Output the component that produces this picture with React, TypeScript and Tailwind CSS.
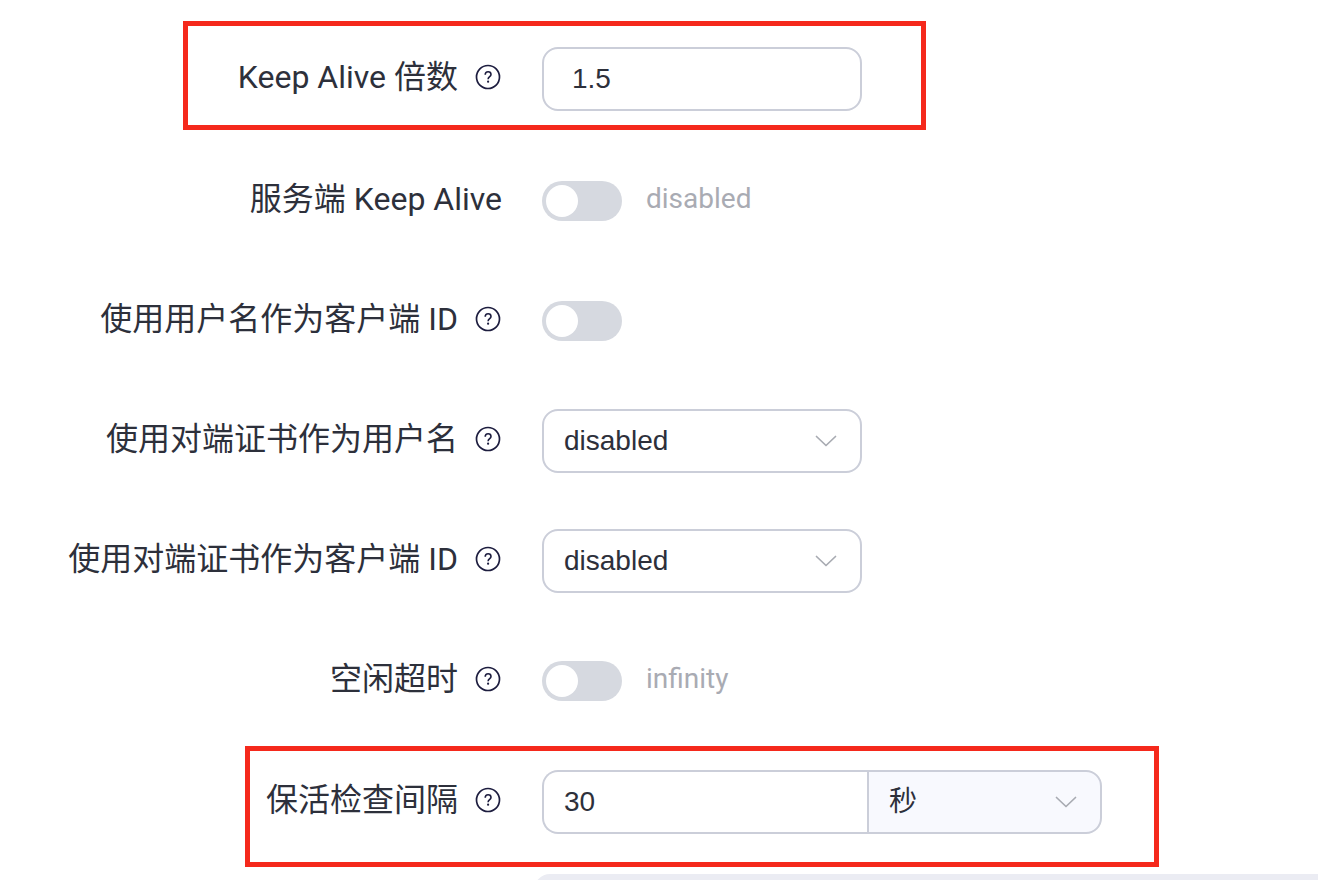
import { useState } from 'react';
import type { ReactNode } from 'react';

function HelpIcon() {
  return (
    <svg viewBox="0 0 28 28" className="ml-4 size-7 shrink-0" fill="none" stroke="#1d1d3f" strokeWidth="1.7" aria-hidden="true">
      <circle cx="14" cy="14" r="11.5" />
      <path d="M11.200 11.800c0-1.900 1.100-3 2.900-3s2.900 1.100 2.900 2.600c0 2.200-2.900 2.300-2.900 4.900" strokeWidth="1.600" />
      <circle cx="14.100" cy="18.700" r="1.100" fill="#1d1d3f" stroke="none" />
    </svg>
  );
}

function Chevron() {
  return (
    <svg viewBox="0 0 24 24" className="pointer-events-none absolute top-1/2 right-6 size-6 -translate-y-1/2" fill="none" stroke="#a8abb2" strokeWidth="1.700" strokeLinecap="round" strokeLinejoin="round" aria-hidden="true">
      <path d="M2.500 7.500l9.500 9 9.500-9" />
    </svg>
  );
}

function Row({ id, label, help = true, children }: { id: string; label: string; help?: boolean; children: ReactNode }) {
  return (
    <div className="flex h-16 items-center">
      <div className="flex w-[502px] shrink-0 items-center justify-end pb-1">
        <label htmlFor={id} className="text-[32px] leading-10 whitespace-nowrap">{label}</label>
        {help && <HelpIcon />}
      </div>
      <div className="ml-10 flex items-center">{children}</div>
    </div>
  );
}

function Toggle({ id, text }: { id: string; text?: string }) {
  return (
    <>
      <input
        id={id}
        type="checkbox"
        role="switch"
        className="h-10 w-20 appearance-none rounded-full bg-[#d6d9e0] p-1 before:block before:size-8 before:rounded-full before:bg-white checked:bg-[#00b173] checked:before:ml-10"
      />
      {text && <span className="ml-6 pb-1 text-[28px] leading-8 text-[#a9abb3]">{text}</span>}
    </>
  );
}

function Select({ id }: { id: string }) {
  return (
    <div className="relative">
      <select id={id} className="h-16 w-80 appearance-none rounded-2xl border-2 border-[#cbced9] bg-white px-5 font-['Liberation_Sans','Noto_Sans_CJK_SC',sans-serif] text-[28px]">
        <option>disabled</option>
        <option>cn</option>
        <option>dn</option>
      </select>
      <Chevron />
    </div>
  );
}

export default function App() {
  const [multiplier, setMultiplier] = useState('1.5');
  const [interval, setIntervalValue] = useState('30');
  return (
    <main className="h-screen overflow-hidden bg-white font-[Roboto,'Noto_Sans_CJK_SC',sans-serif] text-[#2d303b]">
      <form className="flex flex-col pt-[21px]">
        <div className="ml-[183px] w-[743px] border-5 border-[#f5291c] pt-[21px] pb-[14px]">
          <div className="-ml-[188px]">
            <Row id="multiplier" label="Keep Alive 倍数">
              <input id="multiplier" value={multiplier} onChange={(e) => setMultiplier(e.target.value)} className="h-16 w-80 rounded-2xl border-2 border-[#cbced9] px-7 font-['Liberation_Sans','Noto_Sans_CJK_SC',sans-serif] text-[28px]" />
            </Row>
          </div>
        </div>
        <div className="mt-[39px] flex flex-col gap-14">
          <Row id="server" label="服务端 Keep Alive" help={false}><Toggle id="server" text="disabled" /></Row>
          <Row id="username" label="使用用户名作为客户端 ID"><Toggle id="username" /></Row>
          <Row id="cert-user" label="使用对端证书作为用户名"><Select id="cert-user" /></Row>
          <Row id="cert-client" label="使用对端证书作为客户端 ID"><Select id="cert-client" /></Row>
          <Row id="idle" label="空闲超时"><Toggle id="idle" text="infinity" /></Row>
        </div>
        <div className="mt-[33px] ml-[245px] w-[914px] border-5 border-[#f5291c] pt-[19px] pb-7">
          <div className="-ml-[250px]">
            <Row id="interval" label="保活检查间隔">
              <input id="interval" value={interval} onChange={(e) => setIntervalValue(e.target.value)} className="h-16 w-[325px] rounded-l-2xl border-2 border-r-0 border-[#cbced9] px-5 font-['Liberation_Sans','Noto_Sans_CJK_SC',sans-serif] text-[28px]" />
              <div className="relative">
                <select aria-label="单位" className="h-16 w-[235px] appearance-none rounded-r-2xl border-2 border-[#cbced9] bg-[#f8f9fe] px-5 font-['Liberation_Sans','Noto_Sans_CJK_SC',sans-serif] text-[28px]">
                  <option>秒</option>
                  <option>分钟</option>
                </select>
                <Chevron />
              </div>
            </Row>
          </div>
        </div>
        <div className="mt-[7px] ml-[534px] h-16 rounded-tl-2xl bg-[#ebecf3]" />
      </form>
    </main>
  );
}
